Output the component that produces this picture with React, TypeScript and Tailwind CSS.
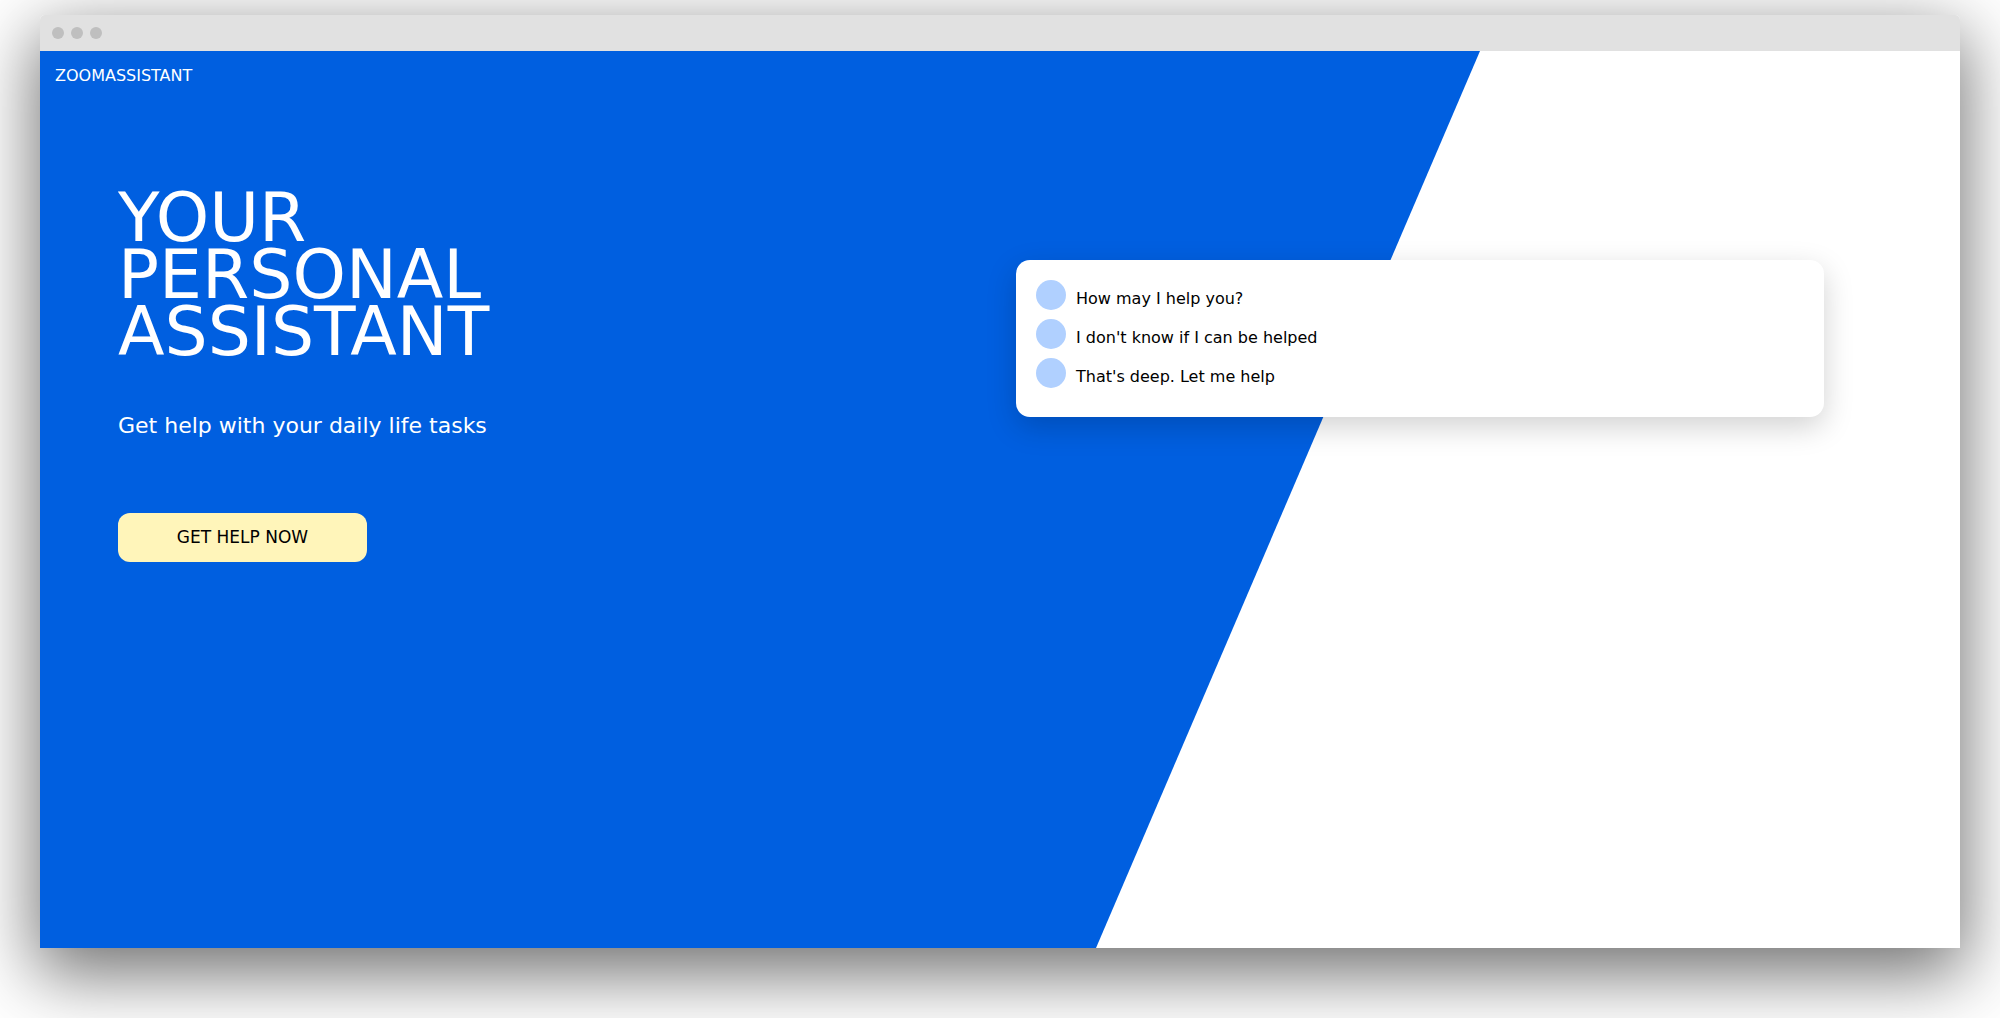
import React from "react";

const messages = [
  "How may I help you?",
  "I don't know if I can be helped",
  "That's deep. Let me help",
];

export default function App() {
  return (
    <div className="w-[2000px] h-[1018px] bg-white overflow-hidden pt-[15px] pl-[40px]" style={{ fontFamily: '"DejaVu Sans", "Liberation Sans", sans-serif' }}>
      <div className="w-[1920px] h-[933px] rounded-t-[5px] flex flex-col shadow-[0_22px_70px_4px_rgba(0,0,0,0.56)]">
        {/* title bar */}
        <div className="h-[36px] bg-[#e1e1e1] rounded-t-[5px] flex items-center gap-[7px] pl-[12px]">
          <span className="w-[12px] h-[12px] rounded-full bg-[#bfbfbf]" />
          <span className="w-[12px] h-[12px] rounded-full bg-[#bfbfbf]" />
          <span className="w-[12px] h-[12px] rounded-full bg-[#bfbfbf]" />
        </div>
        {/* content */}
        <div className="relative h-[897px] bg-white overflow-hidden">
          <svg className="absolute inset-0" width="1920" height="897" viewBox="0 0 1920 897">
            <polygon points="0,0 1440,0 1056,897 0,897" fill="#005fe0" />
          </svg>
          <div className="relative flex">
            <div className="w-[976px] flex flex-col">
              <div className="pl-[15px] pt-[13px] text-white text-[16px]">ZOOMASSISTANT</div>
              <div className="pl-[78px] pt-[101px] flex flex-col">
                <h1 className="text-white text-[68px] leading-[57px] font-normal">
                  YOUR
                  <br />
                  PERSONAL
                  <br />
                  ASSISTANT
                </h1>
                <p className="text-white text-[22px] mt-[49px]">Get help with your daily life tasks</p>
                <button className="mt-[71px] w-[249px] h-[49px] rounded-[12px] bg-[#fff5ba] text-black text-[17px] flex items-center justify-center">
                  GET HELP NOW
                </button>
              </div>
            </div>
            <div className="mt-[209px] w-[808px] h-[157px] bg-white rounded-[14px] shadow-[0_10px_30px_rgba(0,0,0,0.18)] pt-[20px] pl-[20px] flex flex-col gap-[9px]">
              {messages.map((m) => (
                <div key={m} className="flex items-center gap-[10px] h-[30px]">
                  <span className="w-[30px] h-[30px] rounded-full bg-[#b0d0ff] shrink-0" />
                  <span className="text-black text-[16px] pt-[8px]">{m}</span>
                </div>
              ))}
            </div>
          </div>
        </div>
      </div>
    </div>
  );
}
